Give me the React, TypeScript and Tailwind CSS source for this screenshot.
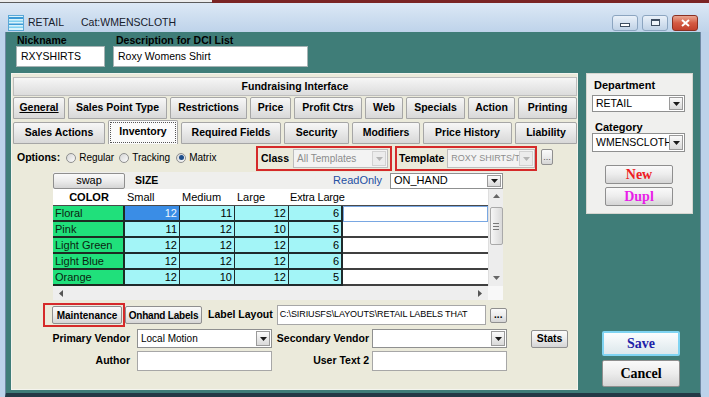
import React from "react";

const rows = [
  { name: "Floral", v: [12, 11, 12, 6] },
  { name: "Pink", v: [11, 12, 10, 5] },
  { name: "Light Green", v: [12, 12, 12, 6] },
  { name: "Light Blue", v: [12, 12, 12, 6] },
  { name: "Orange", v: [12, 10, 12, 5] },
];
const colW = ["w-[55px]", "w-[55px]", "w-[54px]", "w-[54px]"];

const tabs1 = [
  { t: "General", w: "w-[52px]", u: true },
  { t: "Sales Point Type", w: "w-[99px]" },
  { t: "Restrictions", w: "w-[77px]" },
  { t: "Price", w: "w-[41px]" },
  { t: "Profit Ctrs", w: "w-[68px]" },
  { t: "Web", w: "w-[38px]" },
  { t: "Specials", w: "w-[59px]" },
  { t: "Action", w: "w-[47px]" },
  { t: "Printing", w: "w-[59px]" },
];
const tabs2 = [
  { t: "Sales Actions", w: "w-[92px]" },
  { t: "Inventory", w: "w-[70px]", on: true },
  { t: "Required Fields", w: "w-[100px]" },
  { t: "Security", w: "w-[65px]" },
  { t: "Modifiers", w: "w-[68px]" },
  { t: "Price History", w: "w-[89px]" },
  { t: "Liability", w: "w-[62px]" },
];

function Arrow({ c = "#1a1a1a", up = false }: { c?: string; up?: boolean }) {
  return (
    <svg width="7" height="4" viewBox="0 0 7 4">
      <path d={up ? "M0 4h7L3.5 0z" : "M0 0h7L3.5 4z"} fill={c} />
    </svg>
  );
}

function Drop({ value, className = "", disabled = false }: { value: string; className?: string; disabled?: boolean }) {
  return (
    <div
      className={`flex items-center overflow-hidden border ${
        disabled ? "border-[#bdbdbd] bg-[#f3f3f3] text-[#8d8d8d]" : "border-[#8f9090] bg-white text-black"
      } ${className}`}
    >
      <span className="min-w-0 flex-1 overflow-hidden whitespace-nowrap pl-[3px]">{value}</span>
      <span
        className={`my-[1px] mr-[1px] flex w-[14px] shrink-0 items-center justify-center self-stretch border ${
          disabled ? "border-[#d2d2d2] bg-[#ececec]" : "border-[#9a9a9a] bg-linear-to-b from-[#fbfbfb] to-[#d9d9d9]"
        }`}
      >
        <Arrow c={disabled ? "#b4b4b4" : "#1a1a1a"} />
      </span>
    </div>
  );
}

function Btn({ children, className = "" }: { children: React.ReactNode; className?: string }) {
  return (
    <div
      className={`flex items-center justify-center whitespace-nowrap rounded-[2px] border border-[#8f8f8f] bg-linear-to-b from-[#fafafa] via-[#ececec] to-[#d5d5d5] ${className}`}
    >
      {children}
    </div>
  );
}

function Radio({ on = false }: { on?: boolean }) {
  return (
    <span className="flex h-[10px] w-[10px] items-center justify-center rounded-full border border-[#8e8f8f] bg-linear-to-br from-[#d6d6d6] to-[#fbfbfb]">
      {on && <span className="h-[5px] w-[5px] rounded-full bg-[#1d4d8a]" />}
    </span>
  );
}

export default function App() {
  return (
    <div className="relative h-[397px] w-[709px] overflow-hidden bg-[#bcd2ea] font-['Liberation_Sans',Arial,sans-serif] text-black">
      {/* strip of the window behind */}
      <div className="flex h-[3px]">
        <div className="w-[212px] border-b border-[#5b5b5b] bg-[#ececec]" />
        <div className="flex-1 bg-[#7a2424]" />
      </div>

      {/* title bar */}
      <div className="flex h-[29px] items-center bg-linear-to-b from-[#dce8f5] to-[#bed3ea] pl-[8px] pt-[10px]">
        <svg width="16" height="16" viewBox="0 0 16 16">
          <rect x="0.5" y="0.5" width="15" height="15" fill="#d8f3fb" stroke="#5aa7d6" />
          <rect x="1" y="2" width="14" height="2" fill="#3d9ad6" />
          <rect x="1" y="5.5" width="14" height="1.5" fill="#7fd0f0" />
          <rect x="1" y="8.5" width="14" height="1.5" fill="#3d9ad6" />
          <rect x="1" y="11.5" width="14" height="1.5" fill="#7fd0f0" />
        </svg>
        <span className="ml-[4px] text-[10.5px] text-[#16202c]">RETAIL</span>
        <span className="ml-[17px] text-[10.5px] text-[#16202c]">Cat:WMENSCLOTH</span>
        <div className="ml-auto mr-[11px] flex gap-[4px]">
          <div className="flex h-[16px] w-[26px] items-center justify-center rounded-[3px] border border-[#8ca5c0] bg-linear-to-b from-[#eaf1f9] to-[#c0d2e6]">
            <div className="mt-[5px] h-[4px] w-[10px] border border-[#3e4d60] bg-white" />
          </div>
          <div className="flex h-[16px] w-[26px] items-center justify-center rounded-[3px] border border-[#8ca5c0] bg-linear-to-b from-[#eaf1f9] to-[#c0d2e6]">
            <div className="h-[7px] w-[9px] border border-t-2 border-[#3e4d60] bg-[#eef4fa]" />
          </div>
          <div className="flex h-[16px] w-[26px] items-center justify-center rounded-[3px] border border-[#8a3022] bg-linear-to-b from-[#e9a590] via-[#d45a43] to-[#c2402c]">
            <svg width="9" height="8" viewBox="0 0 9 8">
              <path d="M1 1l7 6M8 1L1 7" stroke="#ffffff" strokeWidth="2" />
            </svg>
          </div>
        </div>
      </div>

      {/* window body */}
      <div className="ml-[5px] mr-[8px] flex h-[365px] flex-col border-x border-b-4 border-[#6f89a4] border-b-[#243a46] bg-[#3f7d78]">
        {/* nickname / description */}
        <div className="flex pl-[10px] pt-[2px]">
          <div className="flex w-[89px] flex-col">
            <span className="h-[12px] pl-[1px] text-[10.5px] font-bold leading-[12px]">Nickname</span>
            <div className="flex h-[21px] items-center border border-[#a7b3b4] bg-white pl-[4px] text-[10.5px]">RXYSHIRTS</div>
          </div>
          <div className="ml-[8px] flex w-[195px] flex-col">
            <span className="h-[12px] pl-[3px] text-[10.5px] font-bold leading-[12px]">Description for DCI List</span>
            <div className="flex h-[21px] items-center border border-[#a7b3b4] bg-white pl-[4px] text-[10.5px]">Roxy Womens Shirt</div>
          </div>
        </div>

        <div className="mt-[6px] flex pl-[5px]">
          {/* main panel */}
          <div className="flex h-[317px] w-[567px] flex-col border border-[#f4f4ee] bg-[#ebeadb] pt-[3px]">
            <div className="ml-[1px] flex h-[19px] w-[564px] items-center justify-center border border-[#bdbdbd] bg-linear-to-b from-[#f6f6f6] to-[#dcdcdc] text-[10.5px] font-bold">
              Fundraising Interface
            </div>
            <div className="ml-[1px] mt-[1px] flex gap-[3px]">
              {tabs1.map((t) => (
                <div
                  key={t.t}
                  className={`flex h-[22px] items-center justify-center rounded-t-[2px] border border-[#a6a6a6] bg-linear-to-b from-[#f7f7f7] to-[#d8d8d8] text-[10.5px] font-bold ${t.w}`}
                >
                  <span className={t.u ? "underline" : ""}>{t.t}</span>
                </div>
              ))}
            </div>
            <div className="ml-[1px] mt-[1px] flex h-[24px] items-end gap-[3px]">
              {tabs2.map((t) =>
                t.on ? (
                  <div
                    key={t.t}
                    className={`flex h-[24px] items-stretch rounded-t-[2px] border border-b-0 border-[#a6a6a6] bg-[#fbfbfb] p-[1px] ${t.w}`}
                  >
                    <div className="flex flex-1 items-center justify-center border border-dotted border-[#555] pb-[2px] text-[10.5px] font-bold">
                      {t.t}
                    </div>
                  </div>
                ) : (
                  <div
                    key={t.t}
                    className={`flex h-[22px] items-center justify-center rounded-t-[2px] border border-[#a6a6a6] bg-linear-to-b from-[#f7f7f7] to-[#d8d8d8] text-[10.5px] font-bold ${t.w}`}
                  >
                    {t.t}
                  </div>
                )
              )}
            </div>

            {/* options row */}
            <div className="flex h-[27px] items-start pl-[5px]">
              <div className="flex w-[239px] items-center pt-[6px] text-[10px]">
                <span className="text-[10.5px] font-bold">Options:</span>
                <span className="ml-[6px]"><Radio /></span>
                <span className="ml-[3px]">Regular</span>
                <span className="ml-[5px]"><Radio /></span>
                <span className="ml-[3px]">Tracking</span>
                <span className="ml-[6px]"><Radio on /></span>
                <span className="ml-[3px]">Matrix</span>
              </div>
              <div className="mt-[2px] flex h-[25px] w-[136px] items-center border-2 border-[#d52a2a] pl-[3px]">
                <span className="text-[10.5px] font-bold">Class</span>
                <Drop value="All Templates" disabled className="ml-[4px] h-[19px] w-[95px] text-[10px]" />
              </div>
              <div className="ml-[3px] mt-[2px] flex h-[25px] w-[142px] items-center border-2 border-[#d52a2a] pl-[2px]">
                <span className="text-[10.5px] font-bold">Template</span>
                <Drop value="ROXY SHIRTS/T" disabled className="ml-[3px] h-[19px] w-[90px] text-[9px]" />
              </div>
              <Btn className="ml-[4px] mt-[5px] h-[16px] w-[12px] text-[9px] leading-none text-[#555]">...</Btn>
            </div>

            {/* matrix grid */}
            <div className="ml-[41px] mt-[1px] flex w-[450px] flex-col">
              <div className="flex h-[17px] items-center bg-[#efefed]">
                <Btn className="h-[16px] w-[72px] text-[11px]">swap</Btn>
                <span className="ml-[10px] text-[10.5px] font-bold">SIZE</span>
                <span className="ml-auto mr-[8px] text-[11px] text-[#2550a3]">ReadOnly</span>
                <Drop value="ON_HAND" className="h-[16px] w-[113px] text-[11px]" />
              </div>
              <div className="flex">
                <div className="flex w-[435px] flex-col bg-white">
                  <div className="flex h-[17px] items-center whitespace-nowrap border-b border-[#4a4a4a] text-[11px]">
                    <span className="w-[72px] text-center font-bold">COLOR</span>
                    <span className="w-[55px] pl-[2px]">Small</span>
                    <span className="w-[55px] pl-[2px]">Medium</span>
                    <span className="w-[54px] pl-[2px]">Large</span>
                    <span className="w-[56px] pl-[1px] tracking-[-0.2px]">Extra Large</span>
                  </div>
                  {rows.map((r, i) => (
                    <div key={r.name} className="flex h-[16px] text-[11px] leading-[14px]">
                      <div className="w-[72px] border-b-2 border-r-2 border-[#1d2b22] bg-[#20e07b] pl-[2px] text-[#0b1f10]">{r.name}</div>
                      {r.v.map((n, j) => (
                        <div
                          key={j}
                          className={`${colW[j]} border-b-2 ${j === 3 ? "border-r-2" : "border-r"} border-[#1f2a2c] pr-[2px] text-right ${
                            i === 0 && j === 0 ? "bg-[#3a8de6] text-[#eef6ff]" : "bg-[#a3f5f7]"
                          }`}
                        >
                          {n}
                        </div>
                      ))}
                      <div className={`flex-1 bg-white ${i === 0 ? "border border-[#79a7e2]" : "border-b-2 border-[#404040]"}`} />
                    </div>
                  ))}
                </div>
                <div className="flex h-[97px] w-[15px] flex-col items-center border-l border-[#dedede] bg-[#ededed]">
                  <div className="mt-[5px] flex">
                    <Arrow c="#666" up />
                  </div>
                  <div className="mt-[9px] flex h-[38px] w-[13px] flex-col items-center justify-center gap-[2px] rounded-[2px] border border-[#a9a9a9] bg-linear-to-r from-[#f6f6f6] to-[#d9d9d9]">
                    <div className="h-px w-[6px] bg-[#777]" />
                    <div className="h-px w-[6px] bg-[#777]" />
                    <div className="h-px w-[6px] bg-[#777]" />
                  </div>
                  <div className="mb-[6px] mt-auto flex">
                    <Arrow c="#666" />
                  </div>
                </div>
              </div>
              <div className="flex h-[14px]">
                <div className="flex w-[435px] items-center justify-between bg-[#eeeeee] px-[6px]">
                  <svg width="4" height="7" viewBox="0 0 4 7">
                    <path d="M4 0v7L0 3.5z" fill="#555" />
                  </svg>
                  <svg width="4" height="7" viewBox="0 0 4 7">
                    <path d="M0 0v7L4 3.5z" fill="#555" />
                  </svg>
                </div>
                <div className="w-[15px] bg-[#f8f8f8]" />
              </div>
            </div>

            {/* maintenance row */}
            <div className="ml-[31px] mt-[3px] flex h-[24px] items-center">
              <div className="flex h-[24px] w-[82px] items-center border-2 border-[#d52a2a] pl-[7px]">
                <Btn className="h-[18px] w-[70px] text-[10px] font-bold">Maintenance</Btn>
              </div>
              <Btn className="h-[18px] w-[77px] text-[10px] font-bold tracking-[-0.2px]">Onhand Labels</Btn>
              <span className="ml-[6px] text-[10.5px] font-bold">Label Layout</span>
              <div className="ml-[4px] flex h-[20px] w-[209px] items-center overflow-hidden whitespace-nowrap border border-[#a7a7a7] bg-white pl-[2px] text-[9px] tracking-[-0.1px]">
                {"C:\\SIRIUSFS\\LAYOUTS\\RETAIL LABELS THAT"}
              </div>
              <Btn className="ml-[4px] h-[15px] w-[17px] text-[10px] font-bold leading-none">...</Btn>
            </div>

            {/* vendor row */}
            <div className="mt-[2px] flex h-[19px] items-center text-[10.5px]">
              <span className="w-[118px] text-right font-bold">Primary Vendor</span>
              <Drop value="Local Motion" className="ml-[7px] h-[19px] w-[135px] text-[10px]" />
              <span className="w-[98px] pr-[1px] text-right font-bold">Secondary Vendor</span>
              <Drop value="" className="ml-[2px] h-[19px] w-[135px] text-[10px]" />
              <Btn className="ml-[24px] h-[18px] w-[37px] font-bold">Stats</Btn>
            </div>

            {/* author row */}
            <div className="mt-[3px] flex h-[20px] items-center text-[10.5px]">
              <span className="w-[118px] text-right font-bold">Author</span>
              <div className="ml-[7px] h-[20px] w-[135px] border border-[#a7a7a7] bg-white" />
              <span className="w-[98px] pr-[1px] text-right font-bold">User Text 2</span>
              <div className="ml-[2px] h-[20px] w-[135px] border border-[#a7a7a7] bg-white" />
            </div>
          </div>

          {/* right column */}
          <div className="ml-[8px] flex w-[107px] flex-col">
            <div className="flex h-[141px] flex-col border border-[#d6d6d0] bg-[#f0f0ee] pl-[5px] pt-[5px]">
              <span className="pl-[2px] text-[11px] font-bold leading-[13px]">Department</span>
              <Drop value="RETAIL" className="mt-[3px] h-[17px] w-[93px] text-[10.5px]" />
              <span className="mt-[9px] pl-[3px] text-[11px] font-bold leading-[12px]">Category</span>
              <Drop value="WMENSCLOTH" className="h-[19px] w-[93px] text-[10.5px]" />
              <Btn className="ml-[13px] mt-[13px] h-[19px] w-[68px] font-['Liberation_Serif',serif] text-[14px] font-bold text-[#ee1c24]">
                New
              </Btn>
              <Btn className="ml-[13px] mt-[3px] h-[19px] w-[68px] font-['Liberation_Serif',serif] text-[14px] font-bold text-[#e81ee8]">
                Dupl
              </Btn>
            </div>
            <div className="ml-[16px] mt-[117px] flex h-[25px] w-[78px] items-center justify-center rounded-[2px] border-2 border-[#7fd4f2] bg-linear-to-b from-[#fbfdfe] to-[#dde8ec] font-['Liberation_Serif',serif] text-[14px] font-bold text-[#1f1fa8]">
              Save
            </div>
            <Btn className="ml-[16px] mt-[4px] h-[27px] w-[78px] font-['Liberation_Serif',serif] text-[14px] font-bold">Cancel</Btn>
          </div>
        </div>
      </div>
    </div>
  );
}
